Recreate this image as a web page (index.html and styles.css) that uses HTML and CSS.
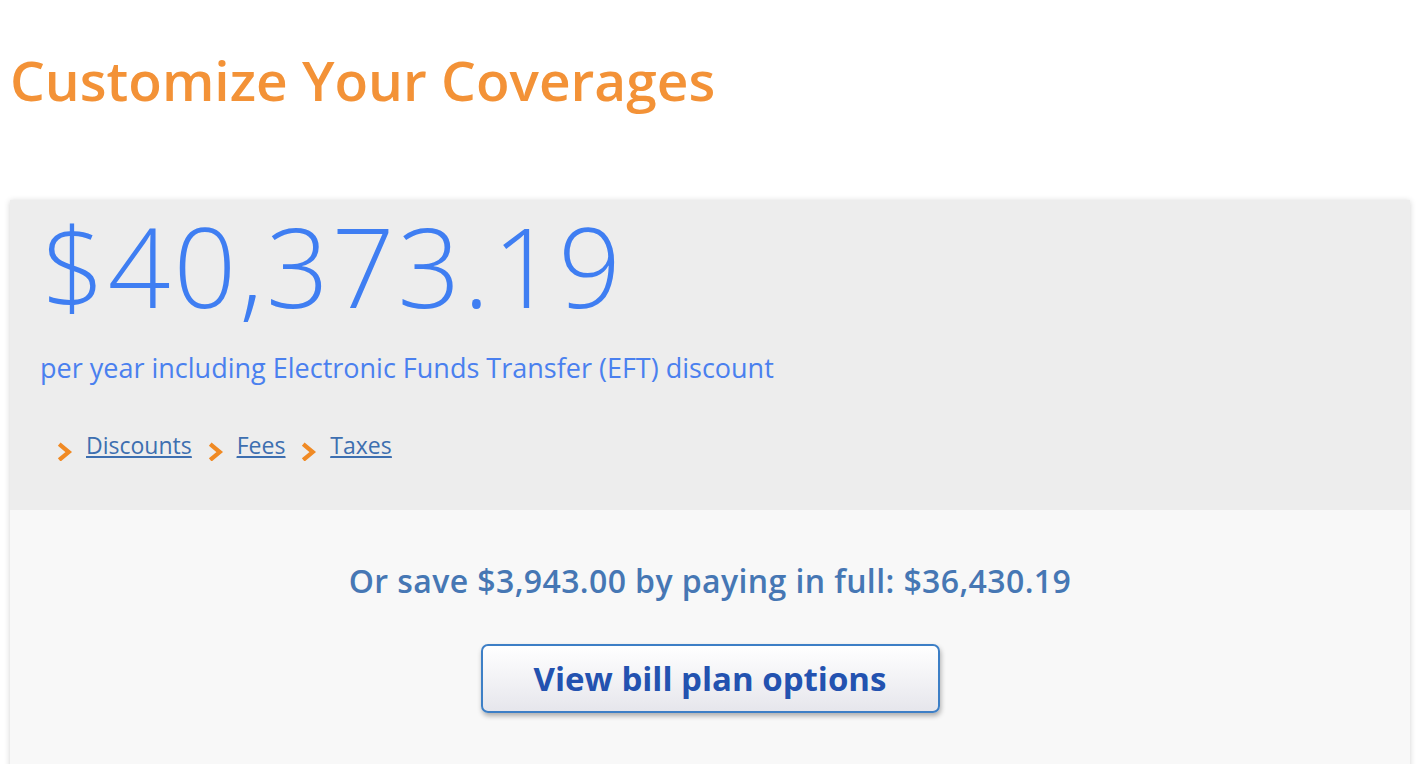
FILE: index.html
```html
<!DOCTYPE html>
<html lang="en">
<head>
    <meta charset="UTF-8">
    <meta name="viewport" content="width=device-width, initial-scale=1.0">
    <title>Customize Your Coverages</title>
    <link rel="stylesheet" href="styles.css">
</head>
<body>

<h1 class="page-title">Customize Your Coverages</h1>

<div class="quote-card">
    <div class="quote-summary">
        <div class="quote-price">$40,373.19</div>
        <p class="quote-note">per year including Electronic Funds Transfer (EFT) discount</p>
        <nav class="quote-links">
            <a href="#discounts"><svg class="chevron" viewBox="0 0 16 18"><polyline points="3,2 12,9.5 3,17"/></svg><span>Discounts</span></a>
            <a href="#fees"><svg class="chevron" viewBox="0 0 16 18"><polyline points="3,2 12,9.5 3,17"/></svg><span>Fees</span></a>
            <a href="#taxes"><svg class="chevron" viewBox="0 0 16 18"><polyline points="3,2 12,9.5 3,17"/></svg><span>Taxes</span></a>
        </nav>
    </div>
    <div class="quote-options">
        <p class="pay-full">Or save $3,943.00 by paying in full: $36,430.19</p>
        <button class="bill-button">View bill plan options</button>
    </div>
</div>

</body>
</html>
```

FILE: styles.css
```css
body {
    font-family: "Open Sans", "Noto Sans", sans-serif;
    margin: 0;
    padding: 0 6px 0 10px;
    background-color: #fff;
}
.page-title {
    color: #f39237; /* orange du titre */
    font-size: 55px;
    font-weight: 600;
    line-height: 1;
    margin: 52px 0 93px 0;
}
.quote-card {
    box-shadow: 0 1px 6px rgba(0, 0, 0, 0.18);
}
.quote-summary {
    background: #ededed;
    height: 310px;
    padding: 10px 30px 0 30px;
    box-sizing: border-box;
}
.quote-price {
    color: #3f7ef2;
    font-size: 110px;
    font-weight: 300;
    letter-spacing: 3px;
    line-height: 1;
    margin-left: 2px;
}
.quote-note {
    color: #4a80ef;
    font-size: 27px;
    line-height: 1;
    margin: 34px 0 0 0;
}
.quote-links {
    display: flex;
    gap: 15px;
    margin-top: 53px;
    padding-left: 16px;
}
.quote-links a {
    display: flex;
    align-items: flex-end;
    gap: 13px;
    color: #3d6fb0;
    font-size: 23px;
    line-height: 1;
}
.quote-links span {
    text-decoration: underline;
    text-underline-offset: 3px;
    text-decoration-thickness: 1px;
}
.chevron {
    width: 17px;
    height: 19px;
    margin-bottom: -4px;
}
.chevron polyline {
    fill: none;
    stroke: #f08a24;
    stroke-width: 4;
}
.quote-options {
    background: #f8f8f8;
    height: 260px;
    display: flex;
    flex-direction: column;
    align-items: center;
    padding-top: 55px;
    box-sizing: border-box;
}
.pay-full {
    color: #4677b4;
    font-size: 32px;
    font-weight: 600;
    letter-spacing: 0.4px;
    line-height: 1;
    margin: 0;
}
.bill-button {
    margin-top: 47px;
    width: 459px;
    height: 69px;
    border: 2px solid #3d7fc6;
    border-radius: 7px;
    background: linear-gradient(#ffffff, #e6e6ec);
    box-shadow: 1px 3px 5px rgba(0, 0, 0, 0.3);
    color: #2352b0;
    font-family: "Open Sans", "Noto Sans", sans-serif;
    font-size: 33px;
    font-weight: 700;
}
```
